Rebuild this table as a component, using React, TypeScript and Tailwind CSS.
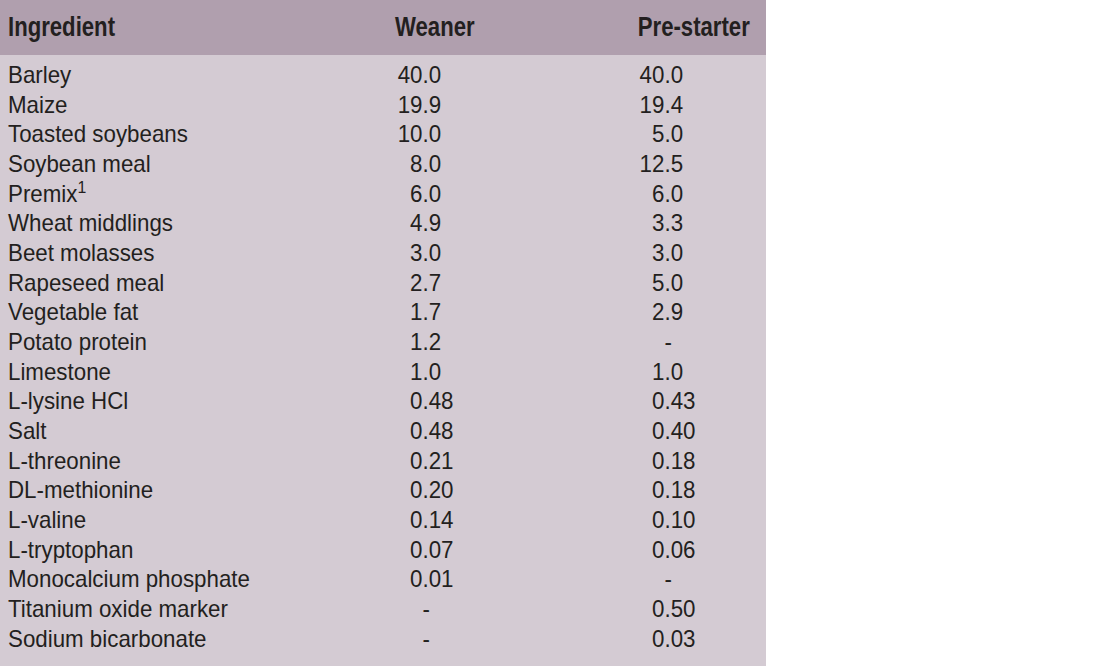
import React from "react";

type Row = { name: React.ReactNode; w: [string, string]; p: [string, string] };

const rows: Row[] = [
  { name: "Barley", w: ["40", ".0"], p: ["40", ".0"] },
  { name: "Maize", w: ["19", ".9"], p: ["19", ".4"] },
  { name: "Toasted soybeans", w: ["10", ".0"], p: ["5", ".0"] },
  { name: "Soybean meal", w: ["8", ".0"], p: ["12", ".5"] },
  {
    name: (
      <>
        Premix<sup className="text-[17px]">1</sup>
      </>
    ),
    w: ["6", ".0"],
    p: ["6", ".0"],
  },
  { name: "Wheat middlings", w: ["4", ".9"], p: ["3", ".3"] },
  { name: "Beet molasses", w: ["3", ".0"], p: ["3", ".0"] },
  { name: "Rapeseed meal", w: ["2", ".7"], p: ["5", ".0"] },
  { name: "Vegetable fat", w: ["1", ".7"], p: ["2", ".9"] },
  { name: "Potato protein", w: ["1", ".2"], p: ["", "-"] },
  { name: "Limestone", w: ["1", ".0"], p: ["1", ".0"] },
  { name: "L-lysine HCl", w: ["0", ".48"], p: ["0", ".43"] },
  { name: "Salt", w: ["0", ".48"], p: ["0", ".40"] },
  { name: "L-threonine", w: ["0", ".21"], p: ["0", ".18"] },
  { name: "DL-methionine", w: ["0", ".20"], p: ["0", ".18"] },
  { name: "L-valine", w: ["0", ".14"], p: ["0", ".10"] },
  { name: "L-tryptophan", w: ["0", ".07"], p: ["0", ".06"] },
  { name: "Monocalcium phosphate", w: ["0", ".01"], p: ["", "-"] },
  { name: "Titanium oxide marker", w: ["", "-"], p: ["0", ".50"] },
  { name: "Sodium bicarbonate", w: ["", "-"], p: ["0", ".03"] },
];

export default function App() {
  return (
    <div className="w-[1100px] h-[666px] bg-white overflow-hidden">
      <div className="w-[766px] h-[666px] bg-[#d4cbd3] text-[#231f20] overflow-hidden">
        <div className="h-[55px] bg-[#b09fae] flex items-center overflow-hidden">
          <div
            className="flex items-center whitespace-nowrap shrink-0 w-[934px] pl-[9.76px] text-[27px] font-bold scale-x-[0.82] origin-left"
            style={{ fontFamily: "'Liberation Sans', Arial, sans-serif" }}
          >
            <span className="w-[472px] shrink-0">Ingredient</span>
            <span className="w-[296px] shrink-0">Weaner</span>
            <span className="shrink-0">Pre-starter</span>
          </div>
        </div>
        <div
          className="pt-[5px] text-[24px]"
          style={{ fontFamily: "'Liberation Sans', Arial, sans-serif" }}
        >
          {rows.map((r, i) => (
            <div
              key={i}
              className="flex w-[824px] h-[29.68px] leading-[29.68px] pl-[8.6px] whitespace-nowrap scale-x-[0.93] origin-left"
            >
              <span className="w-[387px] shrink-0">{r.name}</span>
              <span className="w-[58.7px] shrink-0 text-right">{r.w[0]}</span>
              <span className="w-[202px] shrink-0">{r.w[1]}</span>
              <span className="w-[58.2px] shrink-0 text-right">{r.p[0]}</span>
              <span className="shrink-0">{r.p[1]}</span>
            </div>
          ))}
        </div>
      </div>
    </div>
  );
}
